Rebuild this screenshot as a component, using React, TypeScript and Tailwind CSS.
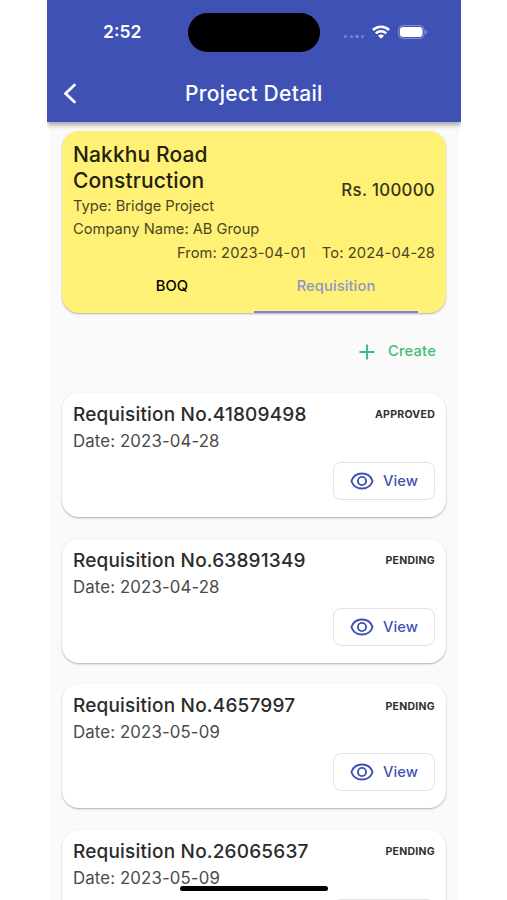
type Requisition = {
  no: string;
  date: string;
  status: 'APPROVED' | 'PENDING';
};

const requisitions: Requisition[] = [
  { no: '41809498', date: '2023-04-28', status: 'APPROVED' },
  { no: '63891349', date: '2023-04-28', status: 'PENDING' },
  { no: '4657997', date: '2023-05-09', status: 'PENDING' },
  { no: '26065637', date: '2023-05-09', status: 'PENDING' },
];

function WifiIcon() {
  return (
    <svg width="18" height="14" viewBox="0 0 18 14" fill="none" stroke="white" strokeWidth="2.5">
      <path d="M.9 5a11.500 11.500 0 0 1 16.200 0" />
      <path d="M3.800 8.300a7.400 7.400 0 0 1 10.400 0" />
      <path d="M9 13.800 6 10.800a4.200 4.200 0 0 1 6 0z" fill="white" stroke="none" />
    </svg>
  );
}

function BatteryIcon() {
  return (
    <svg width="30" height="14" viewBox="0 0 30 14">
      <rect x="0.6" y="0.6" width="25.4" height="12.8" rx="4.2" fill="none" stroke="white" strokeOpacity="0.4" />
      <rect x="1.9" y="2" width="22.6" height="10" rx="3" fill="white" />
      <path d="M27.2 5v4.200c1-.4 1.500-1.200 1.500-2.100s-.5-1.700-1.500-2.100z" fill="white" fillOpacity="0.45" />
    </svg>
  );
}

function EyeIcon() {
  return (
    <svg width="24" height="18" viewBox="0 0 24 18" fill="none" stroke="#3f51b5" strokeWidth="1.9">
      <path d="M1.400 9C3 4.300 7.200 1.500 12 1.500S21 4.300 22.600 9C21 13.700 16.800 16.500 12 16.500S3 13.700 1.400 9z" strokeLinejoin="round" />
      <circle cx="12" cy="9" r="4.100" />
    </svg>
  );
}

function Header() {
  return (
    <header className="relative z-10 h-[122px] bg-[#3f51b5] text-white shadow-[0_3px_5px_rgba(0,0,0,0.35)]">
      <div className="flex h-16 items-center">
        <div className="w-[141px] pl-[56px] text-[17.500px] font-semibold">2:52</div>
        <div className="h-[39px] w-[132px] rounded-full bg-black" />
        <div className="flex items-center pl-[24px]">
          <div className="mt-[9px] mr-[8px] flex gap-[2.200px]">
            <span className="size-[3.400px] rounded-full bg-white/30" />
            <span className="size-[3.400px] rounded-full bg-white/30" />
            <span className="size-[3.400px] rounded-full bg-white/30" />
            <span className="size-[3.400px] rounded-full bg-white/30" />
          </div>
          <WifiIcon />
          <div className="ml-[7.500px]">
            <BatteryIcon />
          </div>
        </div>
      </div>
      <div className="flex h-[58px] items-center">
        <div className="w-[138px] pl-[16px]">
          <svg width="14" height="21" viewBox="0 0 14 21" fill="none" stroke="white" strokeWidth="2.7">
            <path d="M12.300 1.200 2.500 10.500l9.800 9.300" />
          </svg>
        </div>
        <h1 className="pt-px text-[21px] leading-[26px] font-[450] tracking-[0.280px]">Project Detail</h1>
      </div>
    </header>
  );
}

function ProjectCard() {
  return (
    <section className="h-[182px] overflow-hidden rounded-[17px] bg-[#fff176] px-[11px] pt-[11px] text-[#4a4622] shadow-[0_1px_2px_rgba(0,0,0,0.3)]">
      <div className="flex h-[51px] items-end justify-between">
        <h2 className="w-[180px] text-[21px] leading-[25.500px] font-medium tracking-[0.120px] text-[#24220f]">
          Nakkhu Road Construction
        </h2>
        <p className="-mb-[10px] text-[16.800px] leading-[26px] font-medium tracking-[0.320px] text-[#373419]">
          Rs. 100000
        </p>
      </div>
      <div className="pt-[2px] text-[14.700px] leading-[23.400px]">
        <p>Type: Bridge Project</p>
        <p>Company Name: AB Group</p>
        <p className="flex justify-end gap-4 tracking-[0.100px]">
          <span>From: 2023-04-01</span>
          <span>To: 2024-04-28</span>
        </p>
      </div>
      <div className="flex pl-[17px] text-[14.700px] font-medium tracking-[0.100px]">
        <div className="h-[47.500px] w-[164px] pt-[9.500px] text-center leading-[22px] text-black">BOQ</div>
        <div className="h-[47.500px] w-[164px] border-b-[2.500px] border-[#7c86dd] pt-[9.500px] text-center leading-[22px] text-[#8f94c8]">
          Requisition
        </div>
      </div>
    </section>
  );
}

function RequisitionCard({ no, date, status }: Requisition) {
  return (
    <article className="mb-[21.700px] h-[124px] shrink-0 rounded-[17px] bg-white px-[11px] pt-[9px] text-[#4a4a4a] shadow-[0_1px_2px_rgba(0,0,0,0.3)]">
      <div className="flex items-center justify-between">
        <h3 className="text-[19px] leading-[26px] font-medium tracking-[0.180px] text-[#2b2b2b]">Requisition No.{no}</h3>
        <span className="text-[10.500px] font-bold tracking-[0.280px] text-[#303030]">{status}</span>
      </div>
      <p className="text-[16.800px] leading-[26px] tracking-[0.130px]">Date: {date}</p>
      <div className="mt-[8px] flex justify-end">
        <button className="flex h-[38px] w-[102px] items-center rounded-[8px] border border-[#e2e2e2] pl-[16px] text-[#3f51b5]">
          <EyeIcon />
          <span className="pl-[9px] text-[14.700px] font-medium tracking-[0.100px]">View</span>
        </button>
      </div>
    </article>
  );
}

export default function App() {
  return (
    <div className="h-[900px] overflow-hidden bg-white font-['Inter','Liberation_Sans',sans-serif]">
      <div className="relative ml-[47px] flex h-[900px] w-[414px] flex-col overflow-hidden">
        <Header />
        <main className="mx-[2px] grow bg-[#fafafa] px-[13px] pt-[9px]">
          <ProjectCard />
          <div className="flex h-[80px] items-center justify-end pr-[10px] pb-[3px] text-[#43b978]">
            <svg width="16" height="16" viewBox="0 0 16 16" stroke="currentColor" strokeWidth="1.9">
              <path d="M8 .5v15M.5 8h15" />
            </svg>
            <span className="pl-[13px] text-[14.700px] font-medium tracking-[0.200px]">Create</span>
          </div>
          {requisitions.map((item) => (
            <RequisitionCard key={item.no} {...item} />
          ))}
        </main>
        <div className="absolute top-[886px] left-[133px] h-[5px] w-[148px] rounded-full bg-black" />
      </div>
    </div>
  );
}
